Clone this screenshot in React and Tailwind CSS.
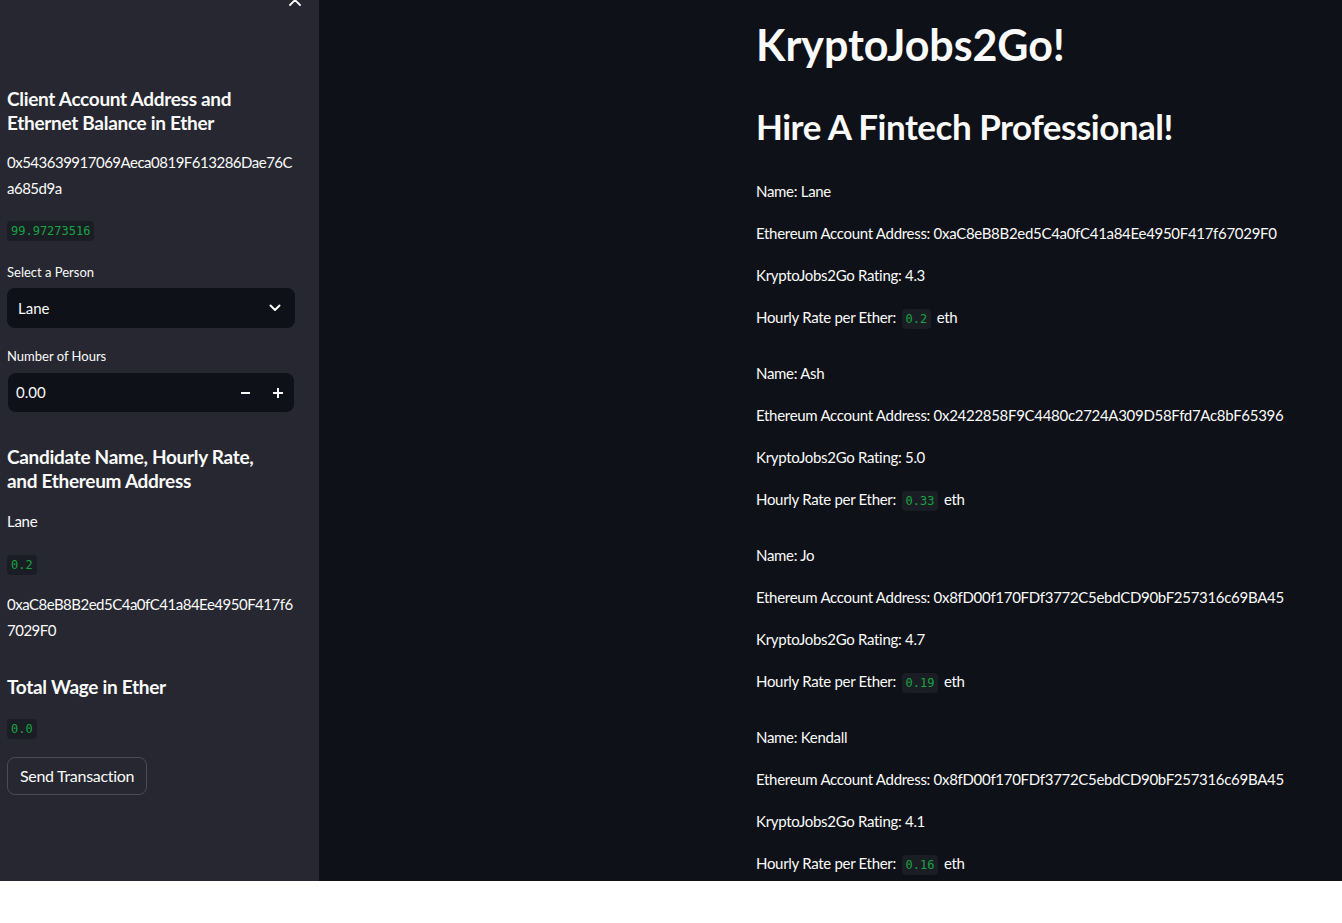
import React from 'react';

const SANS = { fontFamily: '"Lato", "Noto Sans", sans-serif' };

const candidates = [
    { name: 'Lane', address: '0xaC8eB8B2ed5C4a0fC41a84Ee4950F417f67029F0', rating: '4.3', rate: '0.2' },
    { name: 'Ash', address: '0x2422858F9C4480c2724A309D58Ffd7Ac8bF65396', rating: '5.0', rate: '0.33' },
    { name: 'Jo', address: '0x8fD00f170FDf3772C5ebdCD90bF257316c69BA45', rating: '4.7', rate: '0.19' },
    { name: 'Kendall', address: '0x8fD00f170FDf3772C5ebdCD90bF257316c69BA45', rating: '4.1', rate: '0.16' },
];

const Code = ({ children, className = '' }) => (
    <span className={"inline-block rounded-[4px] bg-[#1b1d25] px-[4px] text-[12px] leading-[20px] tracking-normal text-[#17a442] font-['DejaVu_Sans_Mono',monospace] " + className}>
        {children}
    </span>
);

const Sidebar = () => (
    <div className="relative w-[319px] shrink-0 bg-[#262730] pl-[7px] pr-[22px] text-[#fafafa]">
        {/* close button, partly off screen */}
        <svg className="absolute left-[288px] top-[-7px]" width="14" height="14" viewBox="0 0 14 14" fill="none" stroke="#fafafa" strokeWidth="1.8" strokeLinecap="round">
            <path d="M2 2 L12 12 M12 2 L2 12" />
        </svg>

        <h2 className="mt-[87px] max-w-[270px] text-[19px] font-bold leading-[24px] tracking-[-0.3px]">Client Account Address and Ethernet Balance in Ether</h2>
        <p className="mt-[14px] break-all text-[15px] leading-[26px] tracking-[-0.5px]">0x543639917069Aeca0819F613286Dae76Ca685d9a</p>
        <div className="mt-[20px] flex"><Code>99.97273516</Code></div>

        <label className="mt-[21px] block text-[13px] leading-[20px]">Select a Person</label>
        <div className="mt-[6px] flex h-[40px] w-[288px] items-center justify-between rounded-[8px] bg-[#0e1117] pl-[11px] pr-[14px]">
            <span className="text-[15px]">Lane</span>
            <svg width="12" height="8" viewBox="0 0 12 8" fill="none" stroke="#fafafa" strokeWidth="2" strokeLinecap="round" strokeLinejoin="round">
                <path d="M1.5 1.5 L6 6 L10.5 1.5" />
            </svg>
        </div>

        <label className="mt-[18px] block text-[13px] leading-[20px]">Number of Hours</label>
        <div className="ml-[1px] mt-[7px] flex h-[39px] w-[286px] items-center rounded-[8px] bg-[#0e1117] pl-[8px]">
            <span className="flex-1 text-[15px]">0.00</span>
            <div className="flex h-full items-center">
                <span className="flex w-[32px] items-center justify-center">
                    <svg width="10" height="2" viewBox="0 0 10 2"><rect width="9" height="2" fill="#fafafa" /></svg>
                </span>
                <span className="flex w-[32px] items-center justify-center">
                    <svg width="10" height="10" viewBox="0 0 10 10"><path d="M0 4h10v2H0zM4 0h2v10H4z" fill="#fafafa" /></svg>
                </span>
            </div>
        </div>

        <h2 className="mt-[33px] max-w-[270px] text-[19px] font-bold leading-[24px] tracking-[-0.3px]">Candidate Name, Hourly Rate, and Ethereum Address</h2>
        <p className="mt-[15px] text-[15px] leading-[26px] tracking-[-0.3px]">Lane</p>
        <div className="mt-[21px] flex"><Code>0.2</Code></div>
        <p className="mt-[16px] break-all text-[15px] leading-[26px] tracking-[-0.5px]">0xaC8eB8B2ed5C4a0fC41a84Ee4950F417f67029F0</p>

        <h2 className="mt-[32px] text-[19px] font-bold leading-[24px] tracking-[-0.3px]">Total Wage in Ether</h2>
        <div className="mt-[20px] flex"><Code>0.0</Code></div>
        <button className="mt-[18px] h-[38px] rounded-[8px] border border-[#4a4b55] bg-[#262730] px-[12px] text-[16px] tracking-[-0.3px] text-[#fafafa]">Send Transaction</button>
    </div>
);

export default function App() {
    return (
        <div style={SANS} className="bg-white">
            <div className="flex h-[881px] w-full overflow-hidden">
                <Sidebar />
                <main className="flex-1 bg-[#0e1117] pl-[437px] text-[#fafafa]">
                    <h1 className="mt-[19px] text-[43px] font-bold leading-[52px] tracking-[-0.1px]">KryptoJobs2Go!</h1>
                    <h2 className="mt-[33px] text-[35px] font-bold leading-[44px] tracking-[-0.5px]">Hire A Fintech Professional!</h2>
                    <div className="mt-[31px] flex flex-col gap-[32px]">
                        {candidates.map((c) => (
                            <div key={c.name} className="flex flex-col gap-[18px] text-[15px] leading-[24px] tracking-[-0.3px]">
                                <p>Name: {c.name}</p>
                                <p>Ethereum Account Address: {c.address}</p>
                                <p>KryptoJobs2Go Rating: {c.rating}</p>
                                <p>Hourly Rate per Ether: <Code className="mx-[2px]">{c.rate}</Code> eth</p>
                            </div>
                        ))}
                    </div>
                </main>
            </div>
        </div>
    );
}
